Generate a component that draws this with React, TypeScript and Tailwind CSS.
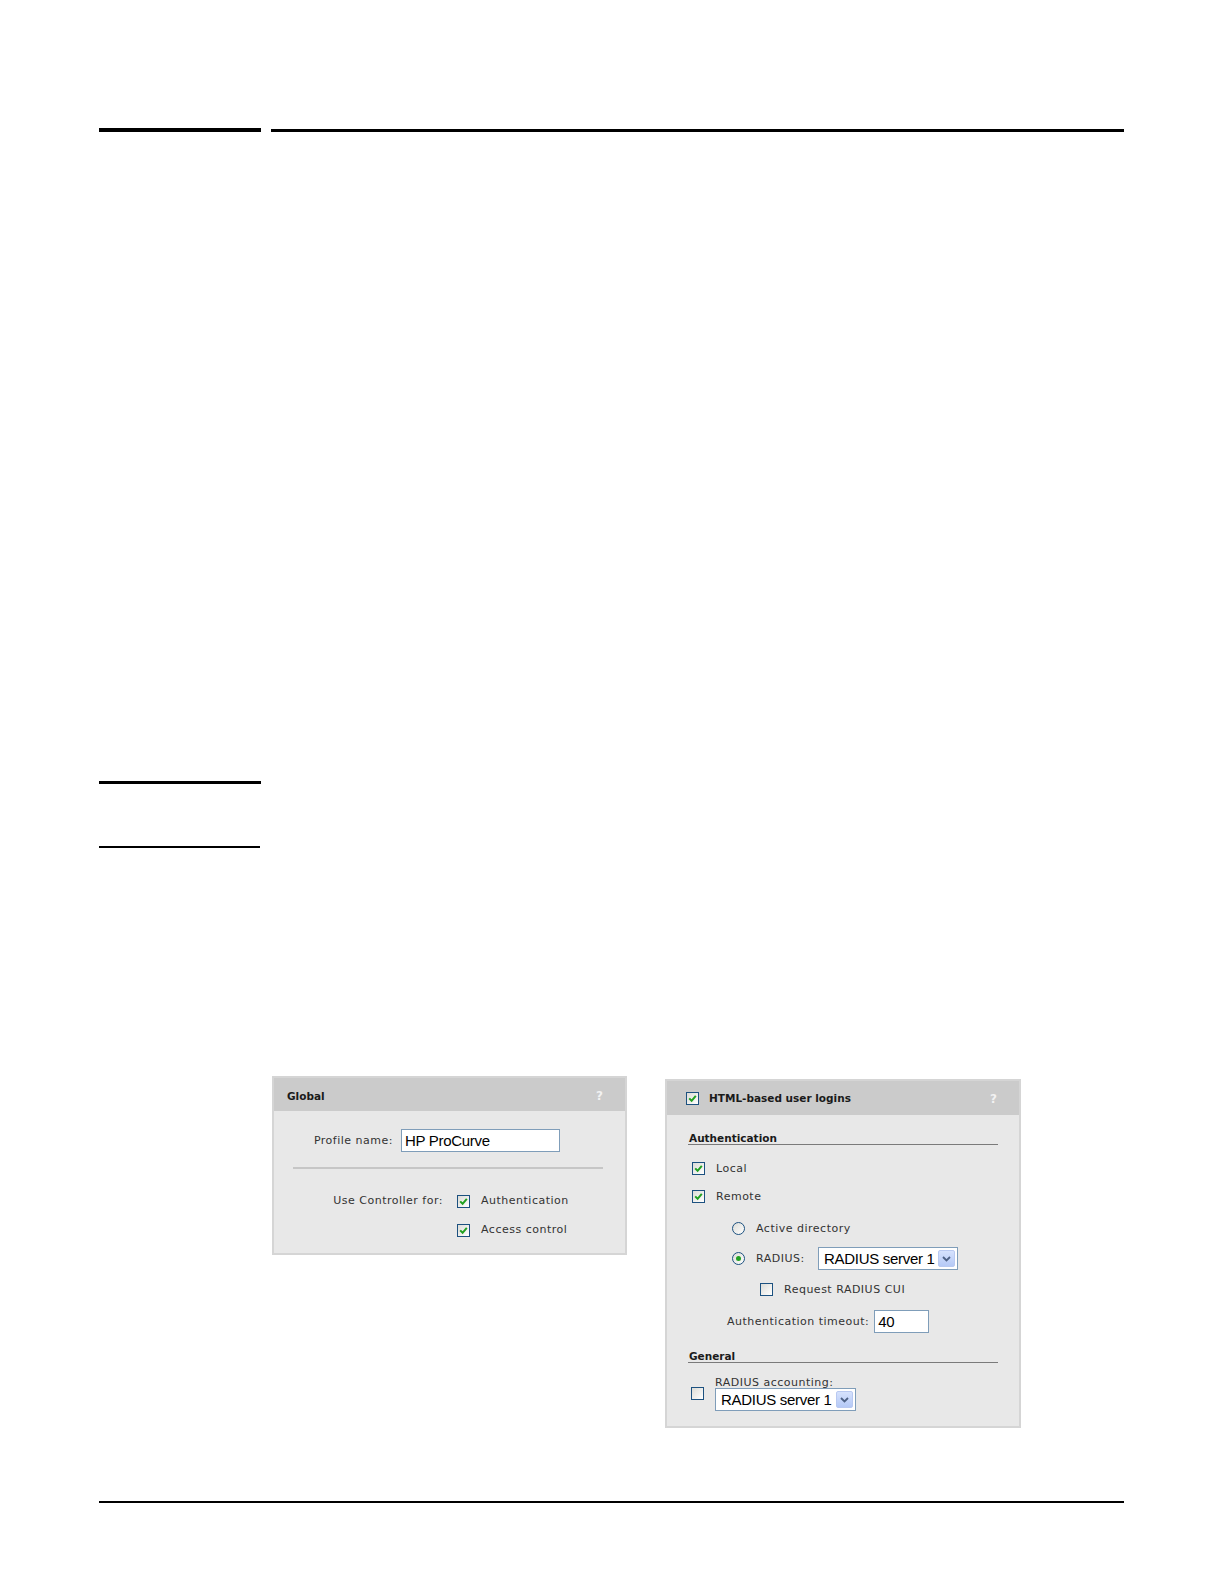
import React from "react";

const labelCls = "font-['DejaVu_Sans',sans-serif] text-[11px] tracking-[0.5px] leading-[13px] text-[#333]";
const headCls = "font-['DejaVu_Sans',sans-serif] text-[10.5px] font-bold leading-[13px] text-[#1a1a1a]";
const sectionCls =
  "ml-[21px] w-[310px] border-b border-[#7a7a7a] pl-[1px] font-['DejaVu_Sans',sans-serif] text-[10.5px] font-bold leading-[12px] text-[#1a1a1a]";
const valueCls = "font-['Liberation_Sans',Arial,sans-serif] text-[15px] tracking-[-0.3px] leading-[21px] text-black";

function Check({ checked = false }: { checked?: boolean }) {
  return (
    <span className="inline-flex h-[13px] w-[13px] shrink-0 items-center justify-center border border-[#1c5180] bg-linear-to-br from-[#dcdcd7] to-white">
      {checked && (
        <svg viewBox="0 0 9 9" className="h-[9px] w-[9px]">
          <path d="M1.2 4.4 L3.6 6.8 L7.8 1.8" stroke="#21a121" strokeWidth="2" fill="none" />
        </svg>
      )}
    </span>
  );
}

function Radio({ checked = false }: { checked?: boolean }) {
  return (
    <span className="inline-flex h-[13px] w-[13px] shrink-0 items-center justify-center rounded-full border border-[#1c5180] bg-linear-to-br from-[#dcdcd7] to-white">
      {checked && <span className="h-[5px] w-[5px] rounded-full bg-[#21a121]" />}
    </span>
  );
}

function Select({ value, width }: { value: string; width: string }) {
  return (
    <div className={`flex h-[23px] items-center justify-between border border-[#7f9db9] bg-white pl-[5px] pr-[2px] ${width}`}>
      <span className={valueCls}>{value}</span>
      <span className="flex h-[17px] w-[17px] items-center justify-center rounded-[2px] border border-[#b9c9f1] bg-linear-to-b from-[#d6e2fd] to-[#b5c9f6]">
        <svg viewBox="0 0 9 6" className="h-[6px] w-[9px]">
          <path d="M1 1 L4.5 4.5 L8 1" stroke="#4d6185" strokeWidth="1.8" fill="none" />
        </svg>
      </span>
    </div>
  );
}

function GlobalPanel() {
  return (
    <div className="flex h-[179px] w-[355px] flex-col border-2 border-[#d5d5d5] bg-[#e8e8e8]">
      <div className="flex h-[33px] shrink-0 items-center justify-between bg-[#cbcbcb] pl-[13px] pr-[22px] pt-[3px]">
        <span className={headCls}>Global</span>
        <span className="font-['DejaVu_Sans',sans-serif] text-[12px] font-bold text-[#f2f2f2]">?</span>
      </div>

      <div className="mt-[18px] flex items-center">
        <span className={`${labelCls} w-[119px] text-right`}>Profile name:</span>
        <div className="ml-[8px] flex h-[23px] w-[159px] items-center border border-[#7f9db9] bg-white pl-[3px]">
          <span className={valueCls}>HP ProCurve</span>
        </div>
      </div>

      <div className="ml-[19px] mt-[15px] h-[2px] w-[310px] bg-[#c6c6c6]" />

      <div className="mt-[24px] flex h-[14px] items-center">
        <span className={`${labelCls} w-[169px] text-right`}>Use Controller for:</span>
        <span className="ml-[14px]"><Check checked /></span>
        <span className={`${labelCls} ml-[11px]`}>Authentication</span>
      </div>
      <div className="mt-[15px] flex h-[14px] items-center">
        <span className="ml-[183px]"><Check checked /></span>
        <span className={`${labelCls} ml-[11px]`}>Access control</span>
      </div>
    </div>
  );
}

function LoginsPanel() {
  return (
    <div className="mt-[3px] flex h-[349px] w-[356px] flex-col border-2 border-[#d5d5d5] bg-[#e8e8e8]">
      <div className="flex h-[34px] shrink-0 items-center justify-between bg-[#cbcbcb] pl-[19px] pr-[22px] pt-[1px]">
        <div className="flex items-center">
          <Check checked />
          <span className={`${headCls} ml-[10px]`}>HTML-based user logins</span>
        </div>
        <span className="font-['DejaVu_Sans',sans-serif] text-[12px] font-bold text-[#f2f2f2]">?</span>
      </div>

      <div className={`${sectionCls} mt-[17px]`}>Authentication</div>

      <div className="ml-[25px] mt-[17px] flex h-[13px] items-center">
        <Check checked />
        <span className={`${labelCls} ml-[11px]`}>Local</span>
      </div>
      <div className="ml-[25px] mt-[15px] flex h-[13px] items-center">
        <Check checked />
        <span className={`${labelCls} ml-[11px]`}>Remote</span>
      </div>

      <div className="ml-[65px] mt-[19px] flex h-[13px] items-center">
        <Radio />
        <span className={`${labelCls} ml-[11px]`}>Active directory</span>
      </div>
      <div className="ml-[65px] mt-[12px] flex h-[23px] items-center">
        <Radio checked />
        <span className={`${labelCls} ml-[11px] w-[62px]`}>RADIUS:</span>
        <Select value="RADIUS server 1" width="w-[140px]" />
      </div>
      <div className="ml-[93px] mt-[13px] flex h-[13px] items-center">
        <Check />
        <span className={`${labelCls} ml-[11px]`}>Request RADIUS CUI</span>
      </div>
      <div className="ml-[60px] mt-[14px] flex h-[23px] items-center">
        <span className={labelCls}>Authentication timeout:</span>
        <div className="ml-[5px] flex h-[23px] w-[55px] items-center border border-[#7f9db9] bg-white pl-[3px]">
          <span className={valueCls}>40</span>
        </div>
      </div>

      <div className={`${sectionCls} mt-[17px]`}>General</div>

      <div className="ml-[24px] mt-[13px] flex items-center">
        <span className="mt-[1px]"><Check /></span>
        <div className="ml-[11px] flex flex-col">
          <span className={labelCls}>RADIUS accounting:</span>
          <div className="-mt-[1px]">
            <Select value="RADIUS server 1" width="w-[141px]" />
          </div>
        </div>
      </div>
    </div>
  );
}

export default function App() {
  return (
    <div className="min-h-[1584px] w-[1224px] bg-white pt-[128px]">
      {/* top rules */}
      <div className="flex items-end">
        <div className="ml-[99px] h-[4px] w-[162px] bg-black" />
        <div className="ml-[10px] h-[3px] w-[853px] bg-black" />
      </div>

      {/* side rules */}
      <div className="ml-[99px] mt-[649px] h-[3px] w-[162px] bg-black" />
      <div className="ml-[99px] mt-[62px] h-[2px] w-[161px] bg-black" />

      {/* screenshots */}
      <div className="ml-[272px] mt-[228px] flex items-start gap-[38px]">
        <GlobalPanel />
        <LoginsPanel />
      </div>

      {/* footer rule */}
      <div className="ml-[99px] mt-[73px] h-[2px] w-[1025px] bg-black" />
    </div>
  );
}
